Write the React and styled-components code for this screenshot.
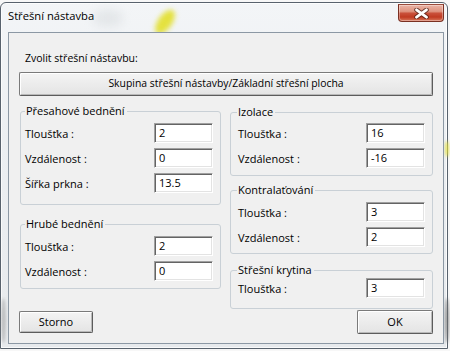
import React from "react";
import styled, { createGlobalStyle } from "styled-components";

const GlobalStyle = createGlobalStyle`
  html, body { margin: 0; padding: 0; background: #f7f7f7; }
  body {
    font-family: "Open Sans", "Noto Sans", sans-serif;
    font-size: 11px;
    color: #000;
  }
  * { box-sizing: border-box; }
`;

const Desktop = styled.div`
  width: 450px;
  height: 351px;
  overflow: hidden;
  padding-top: 2px;
  background: #f7f7f7;
`;

const Frame = styled.div`
  position: relative;
  width: 448px;
  height: 347px;
  border: 1px solid #58626d;
  border-radius: 6px 6px 0 0;
  background: linear-gradient(180deg, #f3f5f7 0%, #eceff2 40%, #e7eaed 100%);
  box-shadow: inset 0 0 0 1px rgba(255, 255, 255, 0.75);
  display: flex;
  flex-direction: column;
`;

const Blob = styled.div`
  position: absolute;
  left: ${(p) => p.$x}px;
  top: ${(p) => p.$y}px;
  width: ${(p) => p.$w}px;
  height: ${(p) => p.$h}px;
  border-radius: 50%;
  background: ${(p) => p.$color};
  filter: blur(${(p) => p.$blur}px);
  transform: rotate(${(p) => p.$rot}deg);
  pointer-events: none;
`;

const TitleBar = styled.div`
  position: relative;
  z-index: 2;
  height: 29px;
  display: flex;
  align-items: flex-start;
  justify-content: space-between;
`;

const Title = styled.div`
  margin-top: 5px;
  padding-left: 7px;
  font-size: 11.2px;
  line-height: 16px;
  color: #000;
`;

const CloseButton = styled.div`
  margin-top: 1px;
  margin-right: 3px;
  width: 46px;
  height: 18px;
  border: 1px solid #7a3022;
  border-top-color: #9a4a3a;
  border-radius: 0 0 4px 4px;
  background: linear-gradient(
    180deg,
    #eab3a5 0%,
    #df9480 40%,
    #c9503a 52%,
    #c03b22 75%,
    #d8765a 100%
  );
  box-shadow: inset 0 0 0 1px rgba(255, 255, 255, 0.35);
  display: flex;
  align-items: center;
  justify-content: center;
`;

const Client = styled.div`
  position: relative;
  z-index: 1;
  margin-left: 7px;
  width: 436px;
  height: 312px;
  overflow: hidden;
  border: 1px solid #8c98a4;
  background: #f0f0f0;
  padding: 17px 10px 0;
  display: flex;
  flex-direction: column;
`;

const Prompt = styled.div`
  font-size: 10.5px;
  line-height: 16px;
  height: 16px;
  padding-left: 6px;
`;

const Button = styled.div`
  width: ${(p) => p.$w};
  height: ${(p) => p.$h}px;
  margin-top: ${(p) => p.$mt || 0}px;
  font-size: ${(p) => p.$fs || 11}px;
  border: 1px solid #7a7a7a;
  border-right-color: #5c5c5c;
  border-bottom-color: #5c5c5c;
  border-radius: 2px;
  background: linear-gradient(180deg, #f4f4f4 0%, #ececec 50%, #e4e4e4 100%);
  box-shadow: inset 1px 1px 0 #ffffff, inset -1px -1px 0 #b9b9b9;
  display: flex;
  align-items: center;
  justify-content: center;
  line-height: 15px;
  padding-bottom: 1px;
  white-space: nowrap;
`;

const Columns = styled.div`
  margin-top: 15px;
  margin-left: 1px;
  display: grid;
  grid-template-columns: 201px 203px;
  column-gap: 9px;
  align-items: start;
`;

const Column = styled.div`
  display: flex;
  flex-direction: column;
`;

const Group = styled.div`
  position: relative;
  margin-top: ${(p) => p.$mt}px;
  border: 1px solid #c9d0d6;
  border-radius: 3px;
  padding: ${(p) => p.$pt}px 7px ${(p) => p.$pb}px ${(p) => p.$pl}px;
  display: flex;
  flex-direction: column;
  gap: 5px;
`;

const Legend = styled.div`
  position: absolute;
  top: -9px;
  left: ${(p) => p.$x}px;
  padding: 0 2px 0 1px;
  background: #f0f0f0;
  line-height: 15px;
  white-space: nowrap;
`;

const Row = styled.div`
  height: 20px;
  display: flex;
  align-items: center;
  justify-content: space-between;
`;

const Label = styled.div`
  line-height: 16px;
  padding-top: 2px;
  white-space: nowrap;
`;

const Field = styled.div`
  width: 59px;
  height: 20px;
  border: 1px solid;
  border-color: #a0a0a0 #ffffff #ffffff #a0a0a0;
  box-shadow: inset 1px 1px 0 #646464, inset -1px -1px 0 #e3e3e3;
  background: #ffffff;
  padding: 0 3px 0 4px;
  line-height: 17px;
  white-space: nowrap;
`;

const Footer = styled.div`
  margin-top: 1px;
  display: flex;
  justify-content: space-between;
  align-items: flex-start;
`;

function CloseIcon() {
  return (
    <svg width="15" height="11" viewBox="0 0 15 11">
      <path
        d="M2.5 1.8 L12.5 9.2 M12.5 1.8 L2.5 9.2"
        stroke="#4a1c13"
        strokeOpacity="0.75"
        strokeWidth="4.6"
        strokeLinecap="round"
        fill="none"
      />
      <path
        d="M2.5 1.8 L12.5 9.2 M12.5 1.8 L2.5 9.2"
        stroke="#ffffff"
        strokeWidth="2.7"
        strokeLinecap="round"
        fill="none"
      />
    </svg>
  );
}

function FieldGroup({ legend, rows, mt, pt, pb, pl, lx }) {
  return (
    <Group $mt={mt} $pt={pt} $pb={pb} $pl={pl}>
      <Legend $x={lx}>{legend}</Legend>
      {rows.map(([label, value]) => (
        <Row key={label}>
          <Label>{label}</Label>
          <Field>{value}</Field>
        </Row>
      ))}
    </Group>
  );
}

export default function App() {
  return (
    <>
      <GlobalStyle />
      <Desktop>
        <Frame>
          <Blob $x={157} $y={5} $w={14} $h={28} $rot={35} $color="rgba(226, 222, 30, 0.85)" $blur={2.5} />
          <Blob $x={92} $y={6} $w={30} $h={18} $rot={0} $color="rgba(200, 205, 210, 0.35)" $blur={5} />
          <Blob $x={444} $y={138} $w={4} $h={16} $rot={0} $color="rgba(226, 222, 60, 0.8)" $blur={1.5} />
          <Blob $x={444} $y={295} $w={4} $h={45} $rot={0} $color="rgba(110, 110, 110, 0.7)" $blur={1.5} />
          <Blob $x={0} $y={295} $w={5} $h={45} $rot={0} $color="rgba(150, 150, 150, 0.5)" $blur={1.5} />
          <TitleBar>
            <Title>Střešní nástavba</Title>
            <CloseButton>
              <CloseIcon />
            </CloseButton>
          </TitleBar>
          <Client>
            <Prompt>Zvolit střešní nástavbu:</Prompt>
            <Button $w="100%" $h={24} $mt={6} $fs={10.4}>
              Skupina střešní nástavby/Základní střešní plocha
            </Button>
            <Columns>
              <Column>
                <FieldGroup
                  legend="Přesahové bednění"
                  mt={0}
                  pt={11}
                  pb={11}
                  pl={4}
                  lx={4}
                  rows={[
                    ["Tloušťka :", "2"],
                    ["Vzdálenost :", "0"],
                    ["Šířka prkna :", "13.5"],
                  ]}
                />
                <FieldGroup
                  legend="Hrubé bednění"
                  mt={19}
                  pt={11}
                  pb={7}
                  pl={4}
                  lx={4}
                  rows={[
                    ["Tloušťka :", "2"],
                    ["Vzdálenost :", "0"],
                  ]}
                />
              </Column>
              <Column>
                <FieldGroup
                  legend="Izolace"
                  mt={1}
                  pt={10}
                  pb={7}
                  pl={7}
                  lx={6}
                  rows={[
                    ["Tloušťka :", "16"],
                    ["Vzdálenost :", "-16"],
                  ]}
                />
                <FieldGroup
                  legend="Kontralaťování"
                  mt={14}
                  pt={11}
                  pb={6}
                  pl={7}
                  lx={6}
                  rows={[
                    ["Tloušťka :", "3"],
                    ["Vzdálenost :", "2"],
                  ]}
                />
                <FieldGroup
                  legend="Střešní krytina"
                  mt={16}
                  pt={7}
                  pb={10}
                  pl={7}
                  lx={6}
                  rows={[["Tloušťka :", "3"]]}
                />
              </Column>
            </Columns>
            <Footer>
              <Button $w="74px" $h={22} $mt={1}>
                Storno
              </Button>
              <Button $w="76px" $h={24}>
                OK
              </Button>
            </Footer>
          </Client>
        </Frame>
      </Desktop>
    </>
  );
}
